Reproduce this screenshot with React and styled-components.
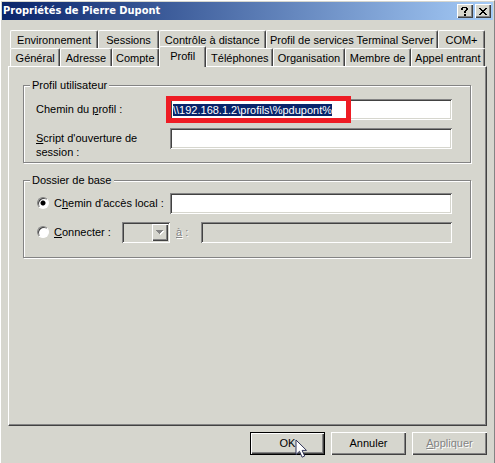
import React, { useEffect, useRef } from 'react';
import styled, { createGlobalStyle, css } from 'styled-components';

const COLORS = {
    face: '#d6d6ce',
    shadow: '#848484',
    dark: '#424242',
    light: '#ffffff',
    text: '#000000',
    select: '#08246b',
    mark: '#ee1c24',
};

const GlobalStyle = createGlobalStyle`
    *, *::before, *::after {
        box-sizing: border-box;
    }
    body {
        margin: 0;
        background: ${COLORS.face};
    }
    body, button, input, select {
        font-family: "Liberation Sans", Arial, sans-serif;
        font-size: 11px;
        line-height: 13px;
        color: ${COLORS.text};
    }
    u {
        text-underline-offset: 1px;
    }
`;

const raised = css`
    box-shadow: inset 1px 1px ${COLORS.light}, inset -1px -1px ${COLORS.dark}, inset -2px -2px ${COLORS.shadow};
`;

const sunken = css`
    box-shadow: inset 1px 1px ${COLORS.shadow}, inset -1px -1px ${COLORS.light},
        inset 2px 2px ${COLORS.dark}, inset -2px -2px ${COLORS.face};
`;

const Dialog = styled.main`
    min-height: 100vh;
    display: flex;
    flex-direction: column;
    padding: 1px 1px 8px 1px;
    border-top: 1px solid ${COLORS.light};
    border-left: 1px solid ${COLORS.light};
    border-right: 1px solid ${COLORS.shadow};
`;

const TitleBar = styled.header`
    height: 18px;
    display: flex;
    align-items: center;
    gap: 2px;
    padding: 0 2px 0 1px;
    background: linear-gradient(to right, ${COLORS.select}, #a5cbf7);
`;

const Title = styled.h1`
    flex-grow: 1;
    margin: 0;
    font-family: "DejaVu Sans Condensed", "DejaVu Sans", sans-serif;
    font-size: 11px;
    line-height: 14px;
    font-weight: bold;
    color: ${COLORS.light};
`;

const TitleButton = styled.button`
    width: 16px;
    height: 14px;
    display: flex;
    align-items: center;
    justify-content: center;
    padding: 0;
    border: 0;
    background: ${COLORS.face};
    ${raised}
`;

const Tabs = styled.nav`
    margin: 10px 8px 0 8px;
`;

const TabRow = styled.div`
    display: flex;
    height: 18px;
`;

const Tab = styled.button`
    flex: ${props => props.$size} 1 0;
    min-width: 0;
    padding: 2px 0 0 0;
    border: 1px solid ${COLORS.light};
    border-right-color: ${COLORS.dark};
    border-bottom: 0;
    border-radius: 2px 2px 0 0;
    background: ${COLORS.face};
    box-shadow: inset -1px 0 ${COLORS.shadow};
    white-space: nowrap;
    ${props => props.$active && css`
        position: relative;
        height: 21px;
        margin-top: -2px;
        padding: 0 0 2px 0;
    `}
`;

const Panel = styled.section`
    flex-grow: 1;
    margin: 0 6px;
    padding: 12px 14px;
    border: 1px solid ${COLORS.light};
    border-right-color: ${COLORS.dark};
    border-bottom-color: ${COLORS.dark};
    box-shadow: inset -1px -1px ${COLORS.shadow};
`;

const Group = styled.fieldset`
    min-width: 0;
    margin: 0 1px 11px 0;
    padding: ${props => props.$top} 18px ${props => props.$bottom} 12px;
    border: 1px solid ${COLORS.shadow};
    box-shadow: 1px 1px ${COLORS.light}, inset 1px 1px ${COLORS.light};
`;

const Legend = styled.legend`
    margin-left: -6px;
    padding: 0 2px;
    background: ${COLORS.face};
`;

const Row = styled.div`
    display: grid;
    grid-template-columns: 134px 1fr;
    align-items: start;
    & + & {
        margin-top: 8px;
    }
`;

const ConnectRow = styled.div`
    display: flex;
    align-items: start;
    margin-top: 8px;
`;

const Label = styled.label`
    padding: 3px 16px 0 0;
    line-height: 14px;
`;

const RadioLabel = styled.label`
    display: flex;
    align-items: start;
    gap: 5px;
    width: ${props => props.$width};
    padding: 4px 0 0 1px;
    white-space: nowrap;
`;

const Radio = styled.input`
    appearance: none;
    flex-shrink: 0;
    width: 12px;
    height: 12px;
    margin: 0;
    border: 1px solid;
    border-color: ${COLORS.shadow} ${COLORS.light} ${COLORS.light} ${COLORS.shadow};
    border-radius: 50%;
    background: ${COLORS.light};
    box-shadow: inset 1px 1px ${COLORS.dark};
    &:checked {
        background: radial-gradient(circle, ${COLORS.text} 2px, ${COLORS.light} 3px);
    }
`;

const Field = styled.div`
    position: relative;
    display: flex;
`;

const TextBox = styled.input`
    flex: 1 1 0;
    min-width: 0;
    width: 100%;
    height: 21px;
    padding: 0 3px;
    border: 0;
    outline: 0;
    background: ${COLORS.light};
    ${sunken}
    &:disabled {
        background: ${COLORS.face};
    }
    &::selection {
        background: ${COLORS.select};
        color: ${COLORS.light};
    }
`;

const Highlight = styled.span`
    position: absolute;
    top: -3px;
    left: -4px;
    width: 185px;
    height: 27px;
    border: 5px solid ${COLORS.mark};
    pointer-events: none;
`;

const DriveBox = styled.div`
    position: relative;
    width: 48px;
`;

const Drive = styled.select`
    appearance: none;
    display: block;
    width: 100%;
    height: 21px;
    border: 0;
    background: ${COLORS.face};
    opacity: 1;
    ${sunken}
`;

const DriveArrow = styled.span`
    position: absolute;
    top: 2px;
    right: 2px;
    width: 16px;
    height: 17px;
    display: flex;
    align-items: center;
    justify-content: center;
    background: ${COLORS.face};
    pointer-events: none;
    ${raised}
`;

const OffLabel = styled.label`
    width: 31px;
    padding: 4px 0 0 6px;
    color: ${COLORS.shadow};
    text-shadow: 1px 1px ${COLORS.light};
`;

const Footer = styled.footer`
    display: flex;
    justify-content: flex-end;
    gap: 6px;
    padding: 6px 6px 0 0;
`;

const Button = styled.button`
    position: relative;
    width: 75px;
    height: 23px;
    padding: 0;
    border: 0;
    background: ${COLORS.face};
    ${raised}
    ${props => props.$primary && css`
        border: 1px solid ${COLORS.text};
    `}
    &:disabled {
        color: ${COLORS.shadow};
        text-shadow: 1px 1px ${COLORS.light};
    }
`;

const Pointer = styled.svg`
    position: absolute;
    top: 6px;
    left: 44px;
`;

const TAB_ROWS = [
    [
        { name: 'Environnement', size: 88 },
        { name: 'Sessions', size: 60 },
        { name: 'Contrôle à distance', size: 107 },
        { name: 'Profil de services Terminal Server', size: 174 },
        { name: 'COM+', size: 46 },
    ],
    [
        { name: 'Général', size: 50 },
        { name: 'Adresse', size: 51 },
        { name: 'Compte', size: 47 },
        { name: 'Profil', size: 47, active: true },
        { name: 'Téléphones', size: 67 },
        { name: 'Organisation', size: 72 },
        { name: 'Membre de', size: 66 },
        { name: 'Appel entrant', size: 75 },
    ],
];

const App = () => {
    const profilePath = useRef(null);

    useEffect(() => {
        profilePath.current.focus();
        profilePath.current.select();
    }, []);

    return (
        <Dialog>
            <GlobalStyle />
            <TitleBar>
                <Title>Propriétés de Pierre Dupont</Title>
                <TitleButton aria-label="Aide">
                    <svg width="8" height="9" viewBox="0 0 8 9" shapeRendering="crispEdges">
                        <path d="M1 0h5v1H1zM0 1h2v2H0zM5 1h2v2H5zM4 3h2v1H4zM3 4h2v2H3zM3 7h2v2H3z" />
                    </svg>
                </TitleButton>
                <TitleButton aria-label="Fermer">
                    <svg width="8" height="7" viewBox="0 0 8 7" shapeRendering="crispEdges">
                        <path d="M0 0h2v1H0zM6 0h2v1H6zM1 1h2v1H1zM5 1h2v1H5zM2 2h4v1H2zM3 3h2v1H3zM2 4h4v1H2zM1 5h2v1H1zM5 5h2v1H5zM0 6h2v1H0zM6 6h2v1H6z" />
                    </svg>
                </TitleButton>
            </TitleBar>
            <Tabs role="tablist">
                {TAB_ROWS.map((row, i) => (
                    <TabRow key={i}>
                        {row.map(tab => (
                            <Tab
                                key={tab.name}
                                role="tab"
                                aria-selected={Boolean(tab.active)}
                                $size={tab.size}
                                $active={tab.active}
                            >
                                {tab.name}
                            </Tab>
                        ))}
                    </TabRow>
                ))}
            </Tabs>
            <Panel role="tabpanel">
                <Group $top="7px" $bottom="3px">
                    <Legend>Profil utilisateur</Legend>
                    <Row>
                        <Label htmlFor="profile">Chemin du <u>p</u>rofil :</Label>
                        <Field>
                            <TextBox
                                id="profile"
                                ref={profilePath}
                                spellCheck={false}
                                defaultValue={'\\\\192.168.1.2\\profils\\%pdupont%'}
                            />
                            <Highlight />
                        </Field>
                    </Row>
                    <Row>
                        <Label htmlFor="script"><u>S</u>cript d'ouverture de session :</Label>
                        <TextBox id="script" />
                    </Row>
                </Group>
                <Group $top="6px" $bottom="14px">
                    <Legend>Dossier de base</Legend>
                    <Row>
                        <RadioLabel $width="134px">
                            <Radio type="radio" name="home" defaultChecked />
                            <span>C<u>h</u>emin d'accès local :</span>
                        </RadioLabel>
                        <TextBox aria-label="Chemin d'accès local" />
                    </Row>
                    <ConnectRow>
                        <RadioLabel $width="86px">
                            <Radio type="radio" name="home" />
                            <span><u>C</u>onnecter :</span>
                        </RadioLabel>
                        <DriveBox>
                            <Drive aria-label="Lecteur" disabled />
                            <DriveArrow>
                                <svg width="8" height="5" viewBox="0 0 8 5" shapeRendering="crispEdges">
                                    <path d="M1 1h7v1H1zM2 2h5v1H2zM3 3h3v1H3zM4 4h1v1H4z" fill={COLORS.light} />
                                    <path d="M0 0h7v1H0zM1 1h5v1H1zM2 2h3v1H2zM3 3h1v1H3z" fill={COLORS.shadow} />
                                </svg>
                            </DriveArrow>
                        </DriveBox>
                        <OffLabel htmlFor="share"><u>à</u> :</OffLabel>
                        <TextBox id="share" disabled />
                    </ConnectRow>
                </Group>
            </Panel>
            <Footer>
                <Button $primary>
                    OK
                    <Pointer width="13" height="20" viewBox="0 0 13 20">
                        <path
                            d="M1 1v14.5l3.5-3.2 2.6 5.9 2.6-1.2-2.6-5.6h4.4z"
                            fill="#ffffff"
                            stroke="#31355a"
                        />
                    </Pointer>
                </Button>
                <Button>Annuler</Button>
                <Button disabled><u>A</u>ppliquer</Button>
            </Footer>
        </Dialog>
    );
};

export default App;
